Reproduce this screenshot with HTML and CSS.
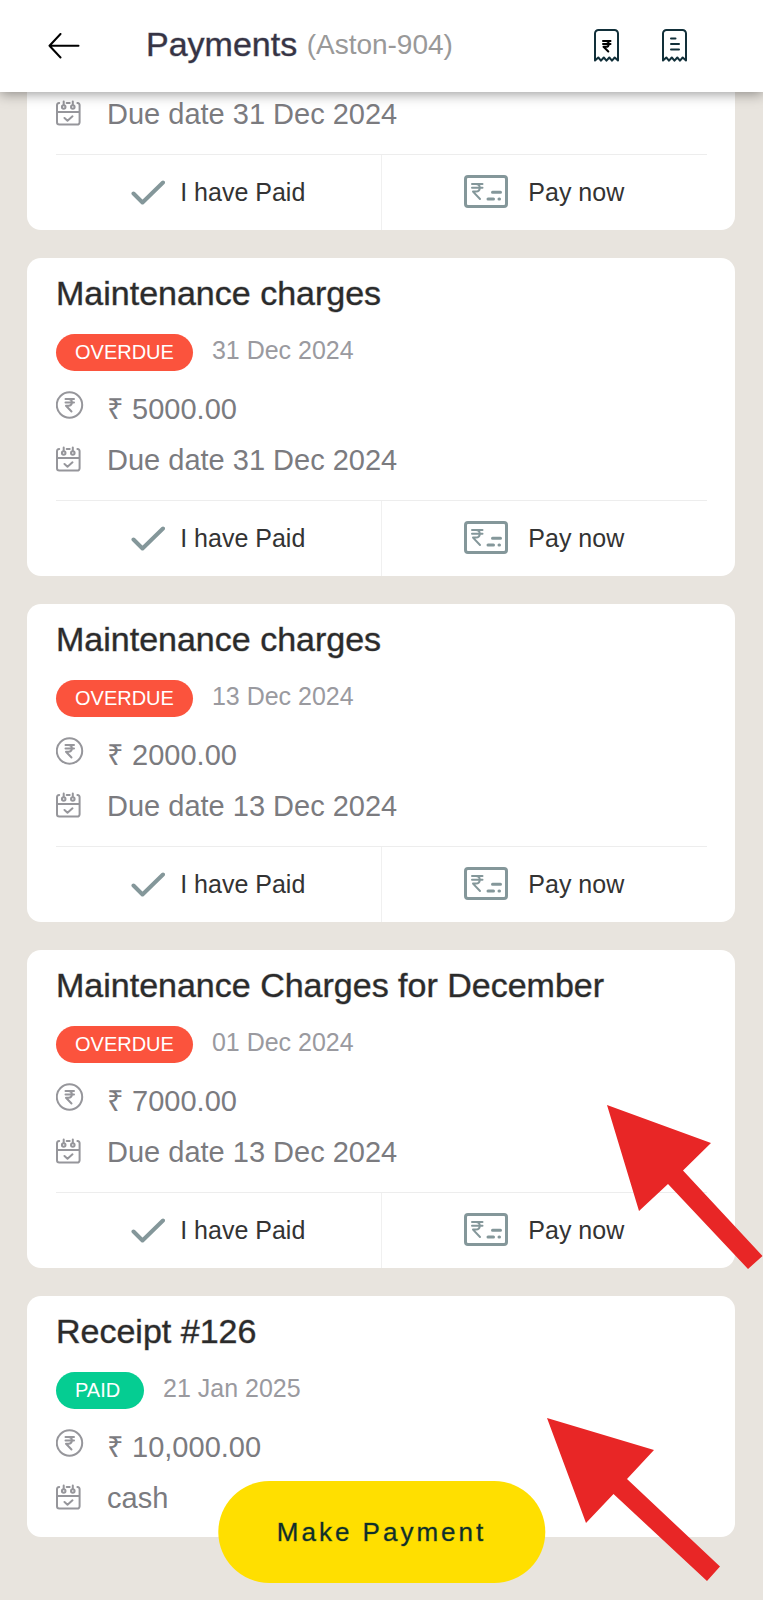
FILE: index.html
```
<!DOCTYPE html>
<html lang="en">

<head>
    <meta charset="UTF-8">
    <meta name="viewport" content="width=device-width, initial-scale=1.0">
    <title>Payments</title>
    <link rel="stylesheet" href="styles.css">
</head>

<body>
    <!-- icons -->
    <svg class="sprite" aria-hidden="true">
        <symbol id="coin" viewBox="0 0 28 36">
            <circle cx="13.5" cy="14" r="12.7" />
            <path d="M9.500 8h8.500M9.500 11.500h8.500M9.500 8h3c4.500 0 4.500 6.800 0 6.800H10l5.500 5.700" />
        </symbol>
        <symbol id="calendar" viewBox="0 0 28 36">
            <path d="M3.200 7A2.300 2.300 0 0 0 1 9.300v17A2.300 2.300 0 0 0 3.300 28.600h18a2.300 2.300 0 0 0 2.300-2.300v-17A2.300 2.300 0 0 0 21.400 7M10.700 7h3M1 16h22.500M8.500 22l3 2.700 5-4.400" />
            <path d="M7.700 5.500v3.500M16.800 5.500v3.500" />
            <circle cx="7.700" cy="11" r="1.800" />
            <circle cx="16.800" cy="11" r="1.800" />
        </symbol>
        <symbol id="check" viewBox="0 0 34 26">
            <path d="M2.500 13.500L11.500 22.500L32 2.500" />
        </symbol>
        <symbol id="cheque" viewBox="0 0 44 36">
            <rect x="1.500" y="1.500" width="41" height="30" rx="2.500" />
            <path class="thin" d="M8 9h10.500M8 12.800h10.500M8.500 9h3.500c5 0 5 7.600 0 7.600H9l7 7.400" />
            <path d="M28.500 17.300h8M24 24h5.500M35 24h0.500" />
        </symbol>
    </svg>

    <header class="header">
        <button class="icon-btn back" aria-label="Back">
            <svg width="32" height="26" viewBox="0 0 32 26"><path d="M12.500 1L1.500 12.700L12.500 24.500M1.500 12.700H30.500" /></svg>
        </button>
        <h1>Payments <span>(Aston-904)</span></h1>
        <button class="icon-btn" aria-label="Bills">
            <svg width="25" height="34" viewBox="0 0 25 34">
                <path d="M1 31.500V4.500a3.500 3.500 0 0 1 3.500-3.500h16a3.500 3.500 0 0 1 3.500 3.500v27l-3.300-3-2.700 3.200-2.700-3.200-2.800 3.200-2.700-3.200-2.800 3.200-2.700-3.200z" />
                <path class="bold" d="M9 12h7.500M9 15h7.500M9 12h3c3.600 0 3.600 5.800 0 5.800h-2.500l4.800 4.700" />
            </svg>
        </button>
        <button class="icon-btn" aria-label="Receipts">
            <svg width="25" height="34" viewBox="0 0 25 34">
                <path d="M1 31.500V4.500a3.500 3.500 0 0 1 3.500-3.500h16a3.500 3.500 0 0 1 3.500 3.500v27l-3.300-3-2.700 3.200-2.700-3.200-2.800 3.200-2.700-3.200-2.800 3.200-2.700-3.200z" />
                <path d="M9 9.500h4.500M9 15h8M9 20.500h8" />
            </svg>
        </button>
    </header>

    <main class="list">
        <article class="card card-cut">
            <p class="row"><svg class="row-icon"><use href="#calendar" /></svg>Due date 31 Dec 2024</p>
            <div class="actions">
                <button class="paid-btn"><svg><use href="#check" /></svg>I have Paid</button>
                <button class="pay-btn"><svg><use href="#cheque" /></svg>Pay now</button>
            </div>
        </article>

        <article class="card">
            <h2>Maintenance charges</h2>
            <div class="status"><span class="tag overdue">OVERDUE</span><time>31 Dec 2024</time></div>
            <p class="row"><svg class="row-icon"><use href="#coin" /></svg>₹ 5000.00</p>
            <p class="row"><svg class="row-icon"><use href="#calendar" /></svg>Due date 31 Dec 2024</p>
            <div class="actions">
                <button class="paid-btn"><svg><use href="#check" /></svg>I have Paid</button>
                <button class="pay-btn"><svg><use href="#cheque" /></svg>Pay now</button>
            </div>
        </article>

        <article class="card">
            <h2>Maintenance charges</h2>
            <div class="status"><span class="tag overdue">OVERDUE</span><time>13 Dec 2024</time></div>
            <p class="row"><svg class="row-icon"><use href="#coin" /></svg>₹ 2000.00</p>
            <p class="row"><svg class="row-icon"><use href="#calendar" /></svg>Due date 13 Dec 2024</p>
            <div class="actions">
                <button class="paid-btn"><svg><use href="#check" /></svg>I have Paid</button>
                <button class="pay-btn"><svg><use href="#cheque" /></svg>Pay now</button>
            </div>
        </article>

        <article class="card">
            <h2>Maintenance Charges for December</h2>
            <div class="status"><span class="tag overdue">OVERDUE</span><time>01 Dec 2024</time></div>
            <p class="row"><svg class="row-icon"><use href="#coin" /></svg>₹ 7000.00</p>
            <p class="row"><svg class="row-icon"><use href="#calendar" /></svg>Due date 13 Dec 2024</p>
            <div class="actions">
                <button class="paid-btn"><svg><use href="#check" /></svg>I have Paid</button>
                <button class="pay-btn"><svg><use href="#cheque" /></svg>Pay now</button>
            </div>
            <svg class="pointer pointer-due" width="156" height="165" viewBox="0 0 156 165">
                <polygon points="0,0 104,38 76,65.500 155.500,151 141,164 61,79 32,106" />
            </svg>
        </article>

        <article class="card">
            <h2>Receipt #126</h2>
            <div class="status"><span class="tag paid">PAID</span><time>21 Jan 2025</time></div>
            <p class="row"><svg class="row-icon"><use href="#coin" /></svg>₹ 10,000.00</p>
            <p class="row"><svg class="row-icon"><use href="#calendar" /></svg>cash</p>
            <svg class="pointer pointer-receipt" width="173" height="164" viewBox="0 0 173 164">
                <polygon points="0,0 107,32 80,61 173,148.500 160,163 66.500,76 39,105" />
            </svg>
        </article>
    </main>

    <button class="make-payment">Make Payment</button>
</body>

</html>
```
FILE: styles.css
```
* {
    margin: 0;
    padding: 0;
    box-sizing: border-box;
}

body {
    background-color: #e8e4de;
    font-family: "Liberation Sans", Arial, sans-serif;
    color: #333;
    overflow-x: hidden;
}

button {
    border: none;
    background: none;
    font-family: inherit;
    color: inherit;
    cursor: pointer;
}

svg {
    flex: none;
    fill: none;
    stroke-linecap: round;
    stroke-linejoin: round;
}

.sprite {
    position: absolute;
    width: 0;
    height: 0;
}

/* header */
.header {
    position: sticky;
    top: 0;
    z-index: 2;
    display: flex;
    align-items: center;
    gap: 43px;
    height: 92px;
    padding: 0 76px 0 48px;
    background-color: #fff;
    box-shadow: 0 2px 12px rgba(0, 0, 0, 0.4);
}

.header h1 {
    flex: 1;
    margin-left: 23px;
    padding-bottom: 3px;
    font-size: 34px;
    font-weight: 400;
    line-height: 40px;
    color: #363445;
    -webkit-text-stroke: 1px rgba(54, 52, 69, 0.4);
    white-space: nowrap;
}

.header h1 span {
    font-size: 28px;
    color: #999;
    -webkit-text-stroke: 0;
    vertical-align: 2px;
}

.icon-btn svg {
    display: block;
    stroke: #12303a;
    stroke-width: 2;
}

.icon-btn .bold {
    stroke: #000;
}

.back svg {
    stroke: #000;
}

/* cards */
.list {
    display: grid;
    gap: 28px;
    padding: 0 28px 64px 27px;
}

.card {
    position: relative;
    padding: 15px 28px 0 29px;
    border-radius: 14px;
    background-color: #fff;
}

/* first card is half under the header */
.card-cut {
    padding-top: 4px;
    border-radius: 0 0 14px 14px;
}

.card:last-child {
    padding-bottom: 21px;
}

.card h2 {
    font-size: 34px;
    font-weight: 400;
    line-height: 40px;
    color: #2b2b2b;
    -webkit-text-stroke: 1px rgba(43, 43, 43, 0.4);
}

.status {
    display: flex;
    align-items: center;
    gap: 19px;
    height: 37px;
    margin: 21px 0 20px;
}

.status time {
    font-size: 25px;
    line-height: 32px;
    padding-bottom: 6px;
    color: #9a9a9f;
}

.tag {
    min-width: 88px;
    padding: 0 19px;
    border-radius: 19px;
    font-size: 20px;
    line-height: 37px;
    color: #fff;
}

.overdue {
    background-color: #fb533d;
}

.paid {
    background-color: #05cd92;
}

.row {
    display: flex;
    gap: 23px;
    font-size: 29px;
    line-height: 36px;
    color: #7b7b7f;
}

.row + .row {
    margin-top: 15px;
}

.row-icon {
    width: 28px;
    height: 36px;
    stroke: #96969b;
    stroke-width: 2;
}

.actions {
    display: grid;
    grid-template-columns: 1fr 1fr;
    height: 76px;
    margin-top: 22px;
    border-top: 1px solid #ededed;
}

.actions button {
    display: flex;
    align-items: center;
    justify-content: center;
    font-size: 25px;
    stroke: #84979a;
}

.paid-btn {
    gap: 15px;
    border-right: 1px solid #f0f0f0;
}

.paid-btn svg {
    width: 34px;
    height: 26px;
    stroke-width: 4;
}

.pay-btn {
    gap: 20px;
}

.pay-btn svg {
    width: 44px;
    height: 36px;
    stroke-width: 3;
}

.thin {
    stroke-width: 2;
}

/* red arrows over the cards */
.pointer {
    position: absolute;
    z-index: 1;
    fill: #e82626;
    pointer-events: none;
}

.pointer-due {
    top: 155px;
    right: -28px;
}

.pointer-receipt {
    top: 122px;
    right: 15px;
}

.make-payment {
    position: fixed;
    left: 50%;
    bottom: 17px;
    transform: translateX(-50%);
    padding: 0 59px;
    border-radius: 51px;
    background-color: #ffdf00;
    font-size: 26px;
    line-height: 102px;
    letter-spacing: 3px;
    white-space: nowrap;
    color: #0f2f2b;
    -webkit-text-stroke: 1px rgba(15, 47, 43, 0.3);
}
```
